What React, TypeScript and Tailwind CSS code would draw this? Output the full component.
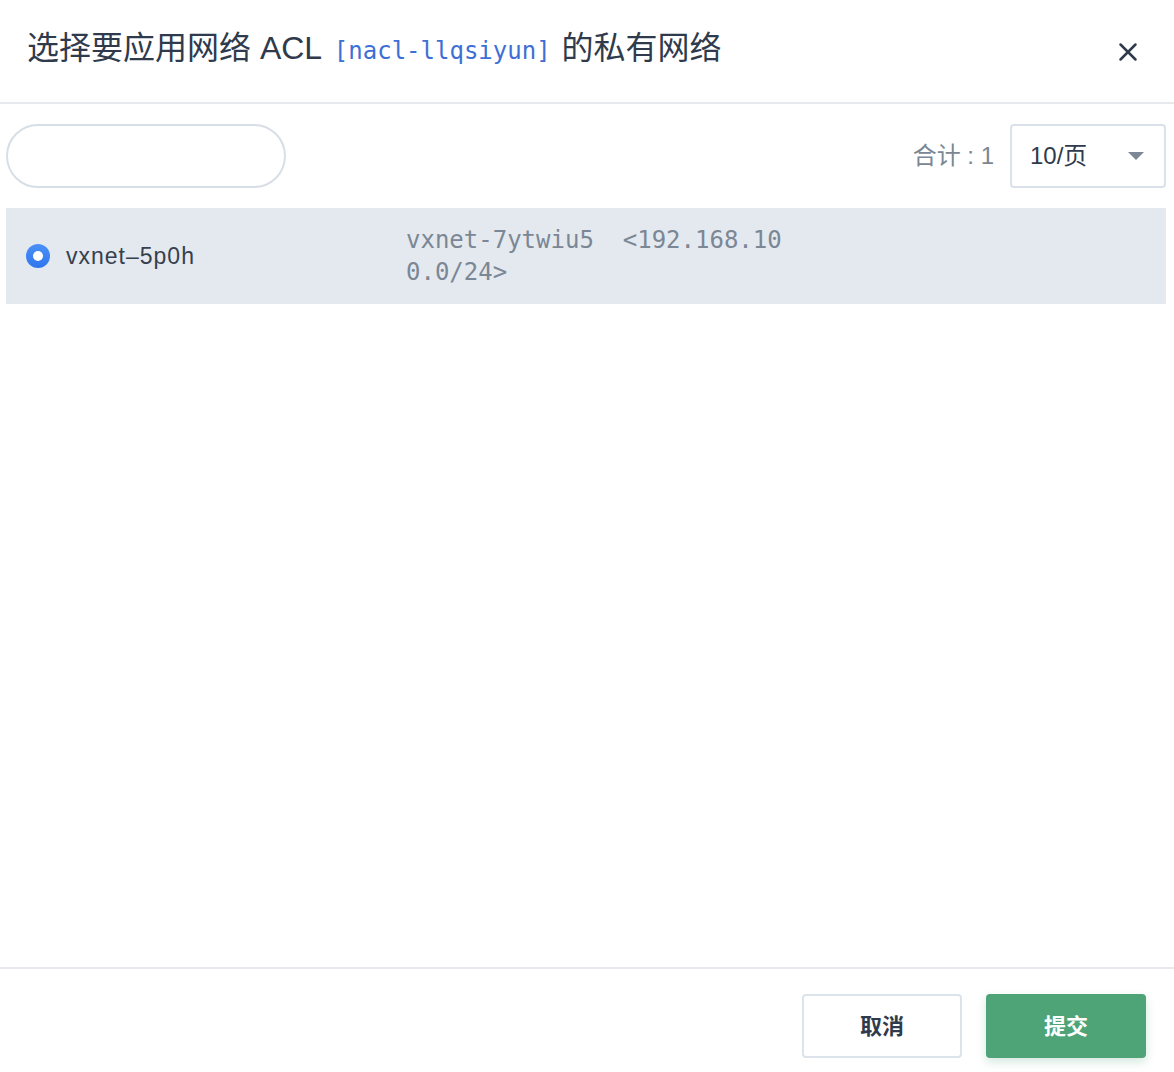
import { X } from 'lucide-react'

const SANS = '"Liberation Sans", "Noto Sans CJK SC", sans-serif'
const MONO = '"DejaVu Sans Mono", "Liberation Mono", monospace'

const rows = [
  { id: 'vxnet-5p0h', name: 'vxnet–5p0h', detail: 'vxnet-7ytwiu5\u00a0\u00a0<192.168.100.0/24>', checked: true },
]

export default function App() {
  return (
    <div className="flex h-[1072px] w-[1174px] flex-col bg-white text-[#2f3b4c]" style={{ fontFamily: SANS }}>
      {/* Header */}
      <div className="flex h-[104px] shrink-0 items-center justify-between border-b-2 border-[#e6eaef] pl-[27px] pr-[31px] pb-[6px]">
        <h1 className="text-[32px] leading-none font-normal">
          选择要应用网络 ACL{' '}
          <span className="ml-[4px] mr-[2px] text-[24px] text-[#3d6fd4]" style={{ fontFamily: MONO }}>
            [nacl-llqsiyun]
          </span>{' '}
          的私有网络
        </h1>
        <button type="button" className="mt-[8px] text-[#2f3b4c]">
          <X size={30} strokeWidth={2} />
        </button>
      </div>

      {/* Body */}
      <div className="flex flex-1 flex-col pl-[6px] pr-[8px] pt-[20px]">
        <div className="flex items-center justify-between">
          <input
            type="text"
            className="h-[64px] w-[280px] rounded-full border-2 border-[#d8dee6] bg-white px-6 text-[22px] outline-none"
          />
          <div className="flex items-center gap-4">
            <span className="text-[24px] text-[#7b8794]">合计 : 1</span>
            <div className="flex h-[64px] w-[156px] items-center justify-between rounded-[4px] border-2 border-[#dbe1e8] pl-[18px] pr-[20px]">
              <span className="text-[24px] text-[#2f3b4c]">10/页</span>
              <svg width="16" height="9" viewBox="0 0 16 9">
                <path d="M0 0 L16 0 L8 8 Z" fill="#7b8794" />
              </svg>
            </div>
          </div>
        </div>

        <div className="mt-[20px]">
          {rows.map(r => (
            <div key={r.id} className="flex h-[96px] items-center bg-[#e4e9f0] pl-[20px]">
              <span className="flex h-[24px] w-[24px] shrink-0 items-center justify-center rounded-full bg-gradient-to-b from-[#4b90f7] to-[#2f76ef]">
                <span className="h-[10px] w-[10px] rounded-full bg-white" />
              </span>
              <span className="ml-[16px] w-[340px] text-[23px] tracking-[1px] text-[#36404d]">{r.name}</span>
              <span
                className="w-[382px] break-all text-[24px] leading-[32px] text-[#7b8794]"
                style={{ fontFamily: MONO }}
              >
                {r.detail}
              </span>
            </div>
          ))}
        </div>
      </div>

      {/* Footer */}
      <div className="flex h-[105px] shrink-0 items-start justify-end gap-[24px] border-t-2 border-[#e6eaef] pr-[28px] pt-[25px]">
        <button
          type="button"
          className="h-[64px] w-[160px] rounded-[4px] border-2 border-[#dde3ea] bg-white text-[22px] font-bold text-[#2f3b4c]"
        >
          取消
        </button>
        <button
          type="button"
          className="h-[64px] w-[160px] rounded-[4px] bg-[#4ea477] text-[22px] font-bold text-white shadow-[0_4px_10px_rgba(78,164,119,0.25)]"
        >
          提交
        </button>
      </div>
    </div>
  )
}
